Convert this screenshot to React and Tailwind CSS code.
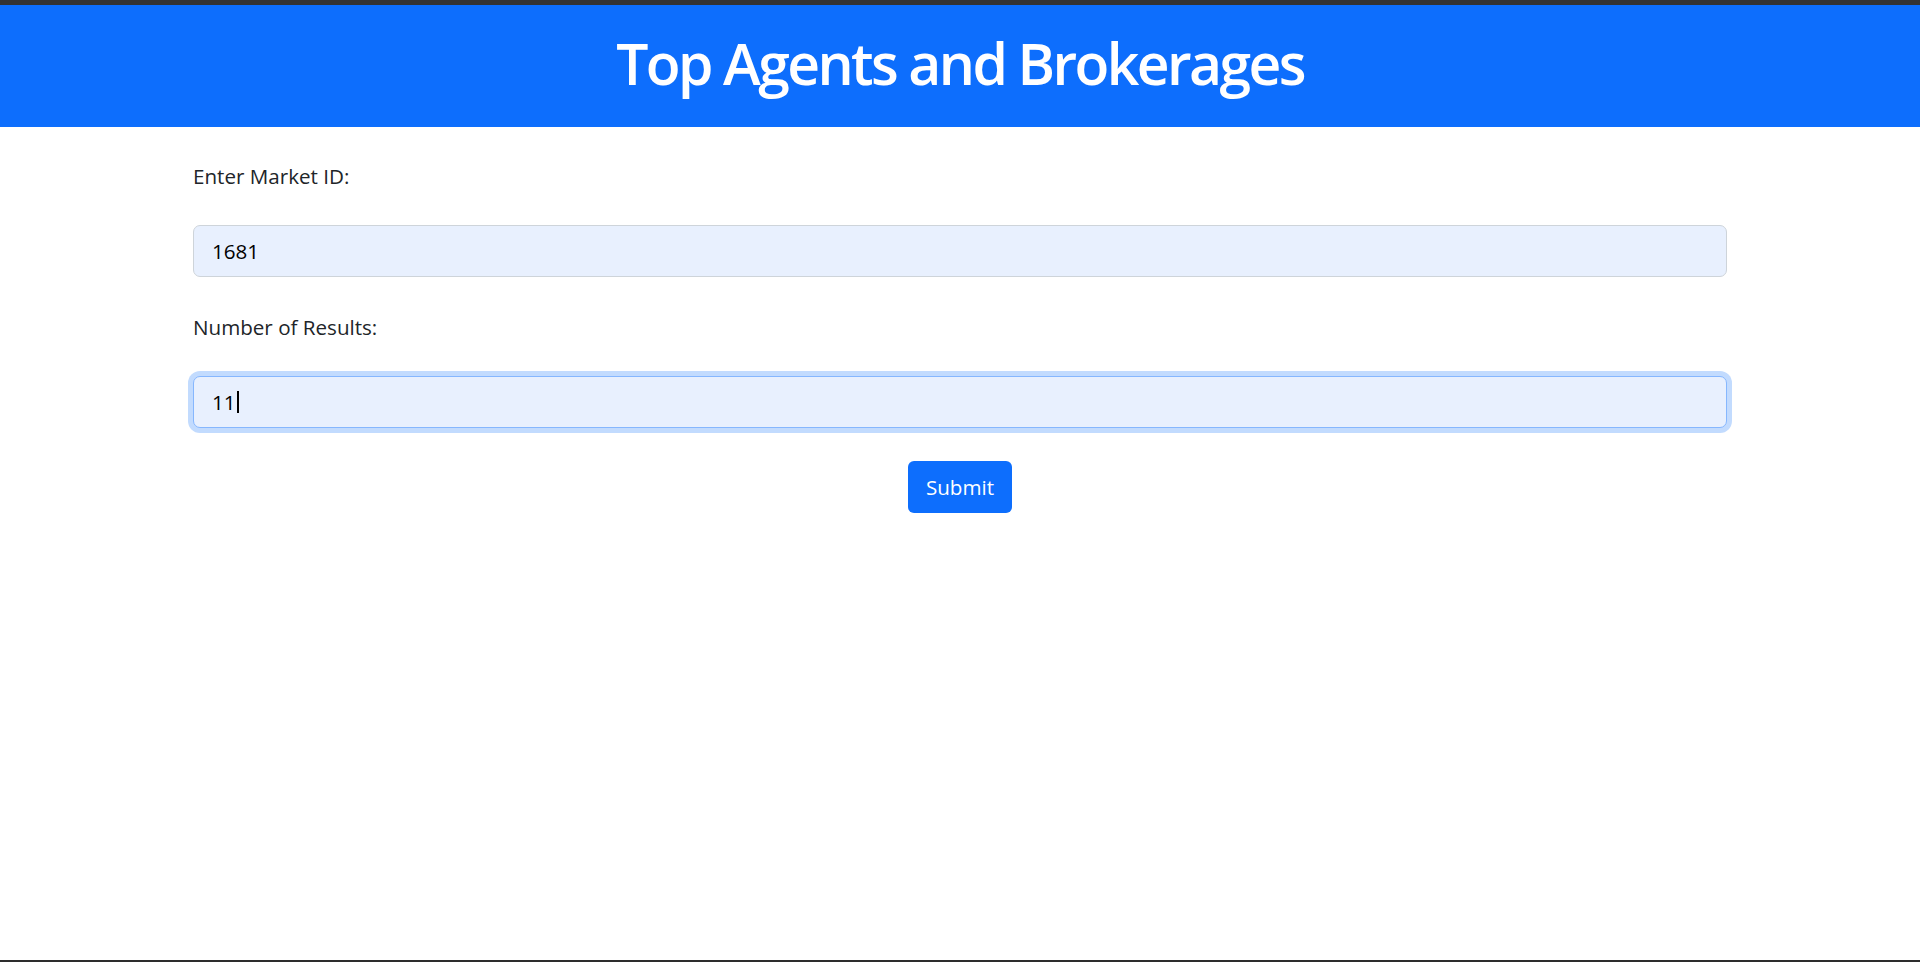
export default function App() {
  return (
    <div className="min-h-screen flex flex-col bg-white" style={{ fontFamily: '"Open Sans", "Noto Sans", sans-serif' }}>
      <div className="h-[5px] bg-[#333333]" />
      <header className="h-[122px] bg-[#0d6efd] pt-[25px]">
        <h1 className="text-center text-white text-[57px] leading-[67px] font-semibold tracking-[-2.6px]">
          Top Agents and Brokerages
        </h1>
      </header>
      <main className="flex-1">
        <div className="w-[1534px] mx-auto pt-[34px] text-[#212529]">
          <label className="block text-[20.6px] leading-[30px]">Enter Market ID:</label>
          <div className="mt-[34px] h-[52px] rounded-[7px] border border-[#ced4da] bg-[#e8f0fe] flex items-center pl-[18px] text-[20.6px] text-black">
            1681
          </div>
          <label className="block mt-[35px] text-[20.6px] leading-[30px]">Number of Results:</label>
          <div className="mt-[34px] h-[52px] rounded-[7px] border border-[#86b7fe] bg-[#e8f0fe] shadow-[0_0_0_5px_#c2dbfe] flex items-center pl-[18px] text-[20.6px] text-black">
            <span>11</span>
            <span className="ml-[1px] inline-block w-[2px] h-[22px] bg-black" />
          </div>
          <div className="flex justify-center mt-[33px]">
            <button className="h-[52px] w-[104px] rounded-[6px] bg-[#0d6efd] text-white text-[20.6px]">
              Submit
            </button>
          </div>
        </div>
      </main>
      <div className="h-[2px] bg-[#2d2d2d]" />
    </div>
  );
}
